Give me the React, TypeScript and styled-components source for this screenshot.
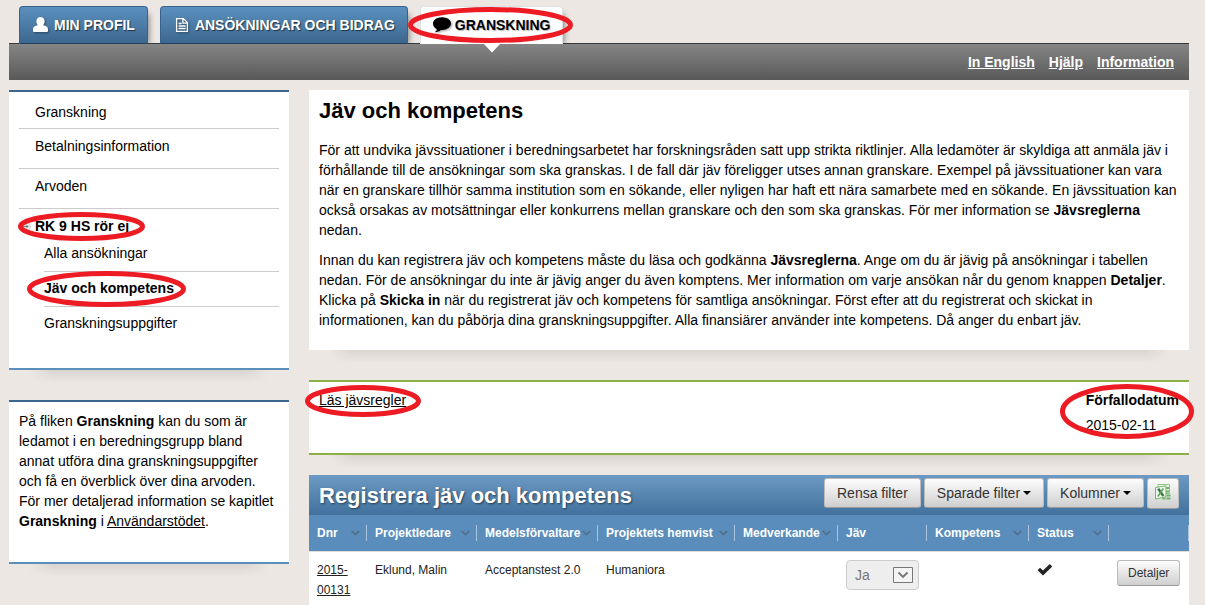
import React from "react";
import styled, { createGlobalStyle } from "styled-components";

const GlobalStyle = createGlobalStyle`
  *, *::before, *::after { box-sizing: border-box; }
  body {
    margin: 0;
    background: #ece7e3;
    color: #000;
    font: 14px/20px "Liberation Sans", Arial, sans-serif;
  }
  a { color: inherit; }
  h1, h2, p, ul { margin: 0; padding: 0; }
  ul { list-style: none; }
  button, select { font-family: inherit; margin: 0; }
`;

const Page = styled.div`
  padding: 6px 16px 0 9px;
`;

/* ---------- top navigation ---------- */

const Tabs = styled.nav`
  display: flex;
  gap: 12px;
  padding-left: 10px;
`;

const Tab = styled.a<{ $active?: boolean }>`
  position: relative;
  display: flex;
  align-items: center;
  gap: 4px;
  height: 38px;
  margin-bottom: -1px;
  padding: 0 12px;
  border: 1px solid ${(p) => (p.$active ? "#dde1e4" : "#36648f")};
  border-bottom-color: ${(p) => (p.$active ? "#fff" : "#1f3f5d")};
  border-radius: 4px 4px 0 0;
  background: ${(p) => (p.$active ? "#fff" : "linear-gradient(#5b90bf, #3c678e)")};
  box-shadow: 5px 4px 6px -4px rgba(0, 0, 0, 0.45);
  clip-path: inset(-20px -20px 0 -20px);
  color: ${(p) => (p.$active ? "#000" : "#fff")};
  font-weight: bold;
  text-decoration: none;
  text-shadow: 1px 1px 1px ${(p) => (p.$active ? "rgba(0,0,0,.3)" : "rgba(0,0,0,.6)")};
  white-space: nowrap;
`;

const TabSlot = styled.div`
  position: relative;
  z-index: 1;
`;

const Pointer = styled.svg`
  position: absolute;
  left: calc(50% - 9px);
  top: 37px;
  display: block;
`;

const Bar = styled.div`
  display: flex;
  justify-content: flex-end;
  align-items: center;
  gap: 14px;
  height: 37px;
  padding: 0 15px;
  border-top: 1px solid #373b3e;
  background: linear-gradient(#858585, #595959);
  color: #fff;
  font-weight: bold;
`;

const Columns = styled.div`
  display: grid;
  grid-template-columns: 280px minmax(0, 1fr);
  gap: 20px;
  align-items: start;
  margin-top: 10px;
`;

const Stack = styled.div`
  display: flex;
  flex-direction: column;
`;

/* ---------- panels ---------- */

const Panel = styled.section<{ $tone?: "blue" | "green" }>`
  position: relative;
  margin-bottom: ${(p) => (p.$tone === "green" ? "20px" : "30px")};
  padding: 0 10px;
  background: #fff;
  border: 0 solid ${(p) => (p.$tone === "green" ? "#8bb046" : "#5b8ebb")};
  border-width: ${(p) => (p.$tone ? "2px 0" : "0")};
  border-top-color: ${(p) => (p.$tone === "blue" ? "#3b678f" : "#8bb046")};

  &::after {
    content: "";
    position: absolute;
    left: 20px;
    right: 20px;
    top: calc(100% + ${(p) => (p.$tone ? "2px" : "0px")});
    height: 13px;
    background: linear-gradient(rgba(60, 60, 40, 0.1), rgba(60, 60, 40, 0));
    mask-image: linear-gradient(to right, transparent, #000 24px, #000 calc(100% - 24px), transparent);
  }
`;

const MenuPanel = styled(Panel)`
  padding-top: 3px;
  padding-bottom: 35px;
`;

const HelpPanel = styled(Panel)`
  padding-top: 9px;
  padding-bottom: 31px;
`;

const IntroPanel = styled(Panel)`
  padding-top: 6px;
  padding-bottom: 20px;
`;

const RulesPanel = styled(Panel)`
  display: flex;
  justify-content: space-between;
  padding-top: 8px;
  padding-bottom: 18px;
`;

const MenuItem = styled.li<{ $tight?: boolean; $last?: boolean }>`
  padding: 7px 0 ${(p) => (p.$last ? 0 : p.$tight ? 6 : 12)}px 16px;
  border-bottom: ${(p) => (p.$last ? "0" : "1px solid #ccc")};
`;

const SubMenu = styled.ul`
  padding: 1px 0 0 9px;
`;

const SubItem = styled.li`
  padding: 6px 0 8px;
  & + & { border-top: 1px solid #ccc; }
  &:last-child { padding-bottom: 0; }
`;

const MenuLink = styled.a<{ $current?: boolean }>`
  text-decoration: none;
  font-weight: ${(p) => (p.$current ? "bold" : "normal")};
`;

const Anchor = styled.div`
  position: relative;
`;

const Marker = styled.svg`
  position: absolute;
  left: -13px;
  top: 6px;
`;

const Title = styled.h1`
  margin-bottom: 14px;
  font-size: 22px;
  line-height: 30px;
`;

const Paragraph = styled.p`
  & + & { margin-top: 10px; }
`;

const DueLabel = styled.p`
  margin-bottom: 5px;
  font-weight: bold;
`;

/* ---------- hand-drawn rings ---------- */

const RingSvg = styled.svg<{ $x: number; $y: number }>`
  position: absolute;
  z-index: 2;
  left: ${(p) => p.$x}px;
  top: ${(p) => p.$y}px;
  pointer-events: none;
`;

function Ring({ x, y, w, h }: { x: number; y: number; w: number; h: number }) {
  return (
    <RingSvg $x={x} $y={y} width={w} height={h} aria-hidden="true">
      <ellipse cx={w / 2} cy={h / 2} rx={w / 2 - 2.5} ry={h / 2 - 2.5} fill="none" stroke="#ed1c24" strokeWidth="5" />
    </RingSvg>
  );
}

/* ---------- table ---------- */

const TableHead = styled.div`
  display: flex;
  justify-content: space-between;
  align-items: flex-start;
  height: 40px;
  padding: 3px 10px 0;
  background: linear-gradient(#6c9ac5, #41719c);
`;

const TableTitle = styled.h2`
  color: #fff;
  font-size: 22px;
  line-height: 36px;
  text-shadow: 1px 1px 2px rgba(0, 0, 0, 0.5);
`;

const Tools = styled.div`
  display: flex;
  gap: 3px;
`;

const Button = styled.button<{ $small?: boolean; $icon?: boolean }>`
  display: inline-flex;
  align-items: center;
  justify-content: center;
  gap: 3px;
  height: ${(p) => (p.$small ? 26 : p.$icon ? 31 : 30)}px;
  padding: ${(p) => (p.$icon ? "0 0 3px" : p.$small ? "0 10px" : "0 12px")};
  width: ${(p) => (p.$icon ? "32px" : "auto")};
  border: 1px solid #bbb;
  border-bottom-color: #999;
  border-radius: 3px;
  background: linear-gradient(#fdfdfd, #cfcfcf);
  color: #333;
  font-size: ${(p) => (p.$small ? 12 : 14)}px;
  line-height: 20px;
  white-space: nowrap;
`;

const Grid = styled.table`
  width: 100%;
  table-layout: fixed;
  border-collapse: separate;
  border-spacing: 0;
  background: #fff;
  color: #222;
  font-size: 12px;
`;

const HeadCell = styled.th`
  height: 37px;
  padding: 0;
  background: #5a8dbb;
  border-bottom: 1px solid #e2ddd9;
  color: #fff;
  text-align: left;
`;

const HeadLabel = styled.div`
  display: flex;
  align-items: center;
  justify-content: space-between;
  height: 16px;
  padding: 0 6px 0 8px;
  border-right: 1px solid #a9c4dc;
  white-space: nowrap;
`;

const Cell = styled.td`
  height: 54px;
  padding: 8px 0 5px 8px;
  vertical-align: top;
`;

const SelectBox = styled.div`
  position: relative;
  width: 73px;
`;

const Select = styled.select`
  appearance: none;
  display: block;
  width: 100%;
  height: 30px;
  padding: 0 8px;
  border: 1px solid #ccc;
  border-radius: 4px;
  background: #eee;
  color: #777;
  opacity: 1;
  font-size: 14px;
`;

const SelectArrow = styled.svg`
  position: absolute;
  right: 6px;
  top: 7px;
  pointer-events: none;
`;

const TabIcon = styled.svg`
  filter: drop-shadow(1px 1px 1px rgba(0, 0, 0, 0.4));
`;

const UserIcon = () => (
  <TabIcon width="18" height="16" viewBox="0 0 18 16" fill="currentColor" aria-hidden="true">
    <path d="M8.500 0C11 0 12.600 1.800 12.600 4.300c0 1.700-.6 3-1.500 4 3.100.3 4.900 1.700 4.900 4V13.800c0 .8-.5 1.200-1.200 1.200H2.200C1.500 15 1 14.600 1 13.800v-1.500c0-2.300 1.800-3.700 4.900-4-.9-1-1.500-2.300-1.500-4C4.400 1.800 6 0 8.500 0z" />
  </TabIcon>
);

const DocIcon = () => (
  <TabIcon width="18" height="16" viewBox="0 0 18 16" fill="none" stroke="currentColor" strokeWidth="1.300" aria-hidden="true">
    <path d="M3.600 1.600h6.800l4 4v8.800H3.600zM9.900 1.800v4.300h4.300M5.600 6.500h3M5.600 9h7M5.600 11.500h7" />
  </TabIcon>
);

const BubbleIcon = () => (
  <TabIcon width="18" height="16" viewBox="0 0 18 16" fill="currentColor" aria-hidden="true">
    <path d="M9 .3c5 0 9 2.800 9 6.300s-4 6.400-9 6.400h-1.200C6.300 14.400 4.300 15.200 2.200 15.200v-.5c1.100-.6 1.600-1.400 1.600-2.500C1.500 11 0 9 0 6.600 0 3.100 4 .3 9 .3z" />
  </TabIcon>
);

const Caret = () => (
  <svg width="8" height="4" viewBox="0 0 8 4" aria-hidden="true">
    <path d="M0 0h8L4 4z" fill="#000" />
  </svg>
);

const Chevron = () => (
  <svg width="9" height="6" viewBox="0 0 9 6" fill="none" stroke="#4f6a85" strokeWidth="1.600" aria-hidden="true">
    <path d="M.7 1L4.500 4.500 8.300 1" />
  </svg>
);

const ExcelIcon = () => (
  <svg width="18" height="18" viewBox="0 0 18 18" aria-hidden="true">
    <path d="M4 1.500h11.500v9H4z" fill="#f6fbf4" stroke="#8cc786" />
    <path d="M12 4h3v2h-3zM12 7.500h3v2h-3zM12.500 11.500h4v2h-4zM12.500 14.500h4v2h-4zM8.500 14.500h3v2h-3z" fill="#6fb068" />
    <path d="M1.500 4.500L12 2.800v11L1.500 16z" fill="#eef7ec" stroke="#74b66d" />
    <path d="M4.200 5.800l5.200 7.200" stroke="#3c7048" strokeWidth="2.400" />
    <path d="M9.400 5.500L3.800 13.500" stroke="#5fa85a" strokeWidth="1.600" />
  </svg>
);

const CheckIcon = () => (
  <svg width="16" height="20" viewBox="0 0 16 20" aria-label="Klar" role="img">
    <path d="M1.800 9L6 13 14 5.300" fill="none" stroke="#222" strokeWidth="3.600" />
  </svg>
);

const columns = [
  { label: "Dnr", width: 58, sort: true },
  { label: "Projektledare", width: 110, sort: true },
  { label: "Medelsförvaltare", width: 121, sort: true },
  { label: "Projektets hemvist", width: 137, sort: true },
  { label: "Medverkande", width: 103, sort: true },
  { label: "Jäv", width: 89, sort: false },
  { label: "Kompetens", width: 102, sort: true },
  { label: "Status", width: 80, sort: true },
  { label: "", width: 80, sort: false },
];

export default function App() {
  return (
    <>
      <GlobalStyle />
      <Page>
        <header>
          <Tabs>
            <TabSlot>
              <Tab href="#profil"><UserIcon />MIN PROFIL</Tab>
            </TabSlot>
            <TabSlot>
              <Tab href="#ansokningar"><DocIcon />ANSÖKNINGAR OCH BIDRAG</Tab>
            </TabSlot>
            <TabSlot>
              <Tab href="#granskning" $active><BubbleIcon />GRANSKNING</Tab>
              <Pointer width="18" height="10" viewBox="0 0 18 10" aria-hidden="true">
                <path d="M0 0h18L9 9.500z" fill="#fff" />
              </Pointer>
              <Ring x={-12} y={1} w={165} h={36} />
            </TabSlot>
          </Tabs>
          <Bar>
            <a href="#english">In English</a>
            <a href="#hjalp">Hjälp</a>
            <a href="#information">Information</a>
          </Bar>
        </header>

        <Columns>
          <aside>
            <MenuPanel $tone="blue">
              <ul>
                <MenuItem $tight><MenuLink href="#g">Granskning</MenuLink></MenuItem>
                <MenuItem><MenuLink href="#b">Betalningsinformation</MenuLink></MenuItem>
                <MenuItem><MenuLink href="#a">Arvoden</MenuLink></MenuItem>
                <MenuItem $last>
                  <Anchor>
                    <Marker width="9" height="9" viewBox="0 0 9 9" aria-hidden="true">
                      <circle cx="4.500" cy="4.500" r="4" fill="#eee" stroke="#ccc" />
                      <path d="M1 4.500h5M4 2.500l2 2-2 2" fill="none" stroke="#777" />
                    </Marker>
                    <MenuLink href="#rk9" $current>RK 9 HS rör ej</MenuLink>
                    <Ring x={-17} y={-4} w={127} h={29} />
                  </Anchor>
                  <SubMenu>
                    <SubItem><MenuLink href="#alla">Alla ansökningar</MenuLink></SubItem>
                    <SubItem>
                      <Anchor>
                        <MenuLink href="#jav" $current>Jäv och kompetens</MenuLink>
                        <Ring x={-17} y={-7} w={159} h={36} />
                      </Anchor>
                    </SubItem>
                    <SubItem><MenuLink href="#uppgifter">Granskningsuppgifter</MenuLink></SubItem>
                  </SubMenu>
                </MenuItem>
              </ul>
            </MenuPanel>
            <HelpPanel $tone="blue">
              <p>
                På fliken <b>Granskning</b> kan du som är ledamot i en beredningsgrupp bland annat utföra dina
                granskningsuppgifter och få en överblick över dina arvoden. För mer detaljerad information se
                kapitlet <b>Granskning</b> i <a href="#stod">Användarstödet</a>.
              </p>
            </HelpPanel>
          </aside>

          <Stack as="main">
            <IntroPanel>
              <Title>Jäv och kompetens</Title>
              <Paragraph>
                För att undvika jävssituationer i beredningsarbetet har forskningsråden satt upp strikta riktlinjer.
                Alla ledamöter är skyldiga att anmäla jäv i förhållande till de ansökningar som ska granskas. I de
                fall där jäv föreligger utses annan granskare. Exempel på jävssituationer kan vara när en granskare
                tillhör samma institution som en sökande, eller nyligen har haft ett nära samarbete med en sökande.
                En jävssituation kan också orsakas av motsättningar eller konkurrens mellan granskare och den som
                ska granskas. För mer information se <b>Jävsreglerna</b> nedan.
              </Paragraph>
              <Paragraph>
                Innan du kan registrera jäv och kompetens måste du läsa och godkänna <b>Jävsreglerna</b>. Ange om du
                är jävig på ansökningar i tabellen nedan. För de ansökningar du inte är jävig anger du även
                komptens. Mer information om varje ansökan når du genom knappen <b>Detaljer</b>. Klicka
                på <b>Skicka in</b> när du registrerat jäv och kompetens för samtliga ansökningar. Först efter att
                du registrerat och skickat in informationen, kan du påbörja dina granskningsuppgifter. Alla
                finansiärer använder inte kompetens. Då anger du enbart jäv.
              </Paragraph>
            </IntroPanel>

            <RulesPanel $tone="green">
              <Anchor>
                <a href="#javsregler">Läs jävsregler</a>
                <Ring x={-14} y={-5} w={116} h={32} />
              </Anchor>
              <Anchor>
                <DueLabel>Förfallodatum</DueLabel>
                <p>2015-02-11</p>
                <Ring x={-26} y={-6} w={134} h={55} />
              </Anchor>
            </RulesPanel>

            <section>
              <TableHead>
                <TableTitle>Registrera jäv och kompetens</TableTitle>
                <Tools>
                  <Button type="button">Rensa filter</Button>
                  <Button type="button">Sparade filter<Caret /></Button>
                  <Button type="button">Kolumner<Caret /></Button>
                  <Button type="button" $icon aria-label="Exportera till Excel"><ExcelIcon /></Button>
                </Tools>
              </TableHead>
              <Grid>
                <colgroup>
                  {columns.map((c, i) => <col key={i} width={c.width} />)}
                </colgroup>
                <thead>
                  <tr>
                    {columns.map((c, i) => (
                      <HeadCell key={i} scope="col">
                        <HeadLabel>{c.label}{c.sort && <Chevron />}</HeadLabel>
                      </HeadCell>
                    ))}
                  </tr>
                </thead>
                <tbody>
                  <tr>
                    <Cell><a href="#2015-00131">2015-<br />00131</a></Cell>
                    <Cell>Eklund, Malin</Cell>
                    <Cell>Acceptanstest 2.0</Cell>
                    <Cell>Humaniora</Cell>
                    <Cell />
                    <Cell>
                      <SelectBox>
                        <Select aria-label="Jäv" disabled defaultValue="Ja">
                          <option>Ja</option>
                          <option>Nej</option>
                        </Select>
                        <SelectArrow width="20" height="16" viewBox="0 0 20 16" fill="none" aria-hidden="true">
                          <path d="M.5.5h19v15H.5z" fill="#f4f4f4" stroke="#777" />
                          <path d="M5.500 5.500L10 10l4.500-4.500" stroke="#777" strokeWidth="1.800" />
                        </SelectArrow>
                      </SelectBox>
                    </Cell>
                    <Cell />
                    <Cell><CheckIcon /></Cell>
                    <Cell><Button type="button" $small>Detaljer</Button></Cell>
                  </tr>
                </tbody>
              </Grid>
            </section>
          </Stack>
        </Columns>
      </Page>
    </>
  );
}
